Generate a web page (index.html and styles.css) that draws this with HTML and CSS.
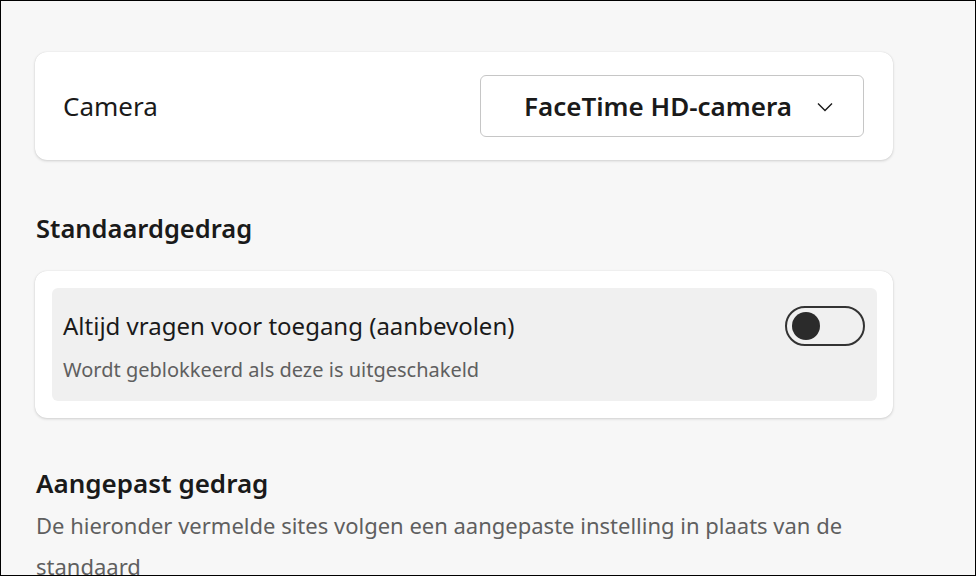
FILE: index.html
```html
<!DOCTYPE html>
<html lang="nl">
<head>
    <meta charset="UTF-8">
    <title>Camera</title>
    <link rel="stylesheet" href="styles.css">
</head>
<body>
    <div class="frame">
        <div class="content">
            <div class="card card-camera">
                <span class="label">Camera</span>
                <div class="select">
                    <span class="select-text">FaceTime HD-camera</span>
                    <svg class="chevron" width="16" height="10" viewBox="0 0 16 10">
                        <path d="M1 1.5 L8 8.5 L15 1.5" fill="none" stroke="#1a1a1a" stroke-width="1.4"/>
                    </svg>
                </div>
            </div>

            <h2 class="section-title">Standaardgedrag</h2>
            <div class="card card-list">
                <div class="row">
                    <div class="row-text">
                        <div class="row-title">Altijd vragen voor toegang (aanbevolen)</div>
                        <div class="row-sub">Wordt geblokkeerd als deze is uitgeschakeld</div>
                    </div>
                    <div class="toggle"><span class="knob"></span></div>
                </div>
            </div>

            <h2 class="section-title section-custom">Aangepast gedrag</h2>
            <p class="section-desc">De hieronder vermelde sites volgen een aangepaste instelling in plaats van de standaard</p>
        </div>
    </div>
</body>
</html>
```

FILE: styles.css
```css
body,div,p,h2,span{margin:0;padding:0;}
body{font-family:"Noto Sans","Open Sans",sans-serif;color:#1a1a1a;}
.frame{width:976px;height:576px;box-sizing:border-box;border:1px solid #000;background:#f7f7f7;overflow:hidden;}
.content{width:858px;padding:51px 0 0 34px;}
.card{background:#fff;border-radius:12px;box-shadow:0 1px 3px rgba(0,0,0,.16),0 0 1px rgba(0,0,0,.12);}
.card-camera{height:108px;display:flex;align-items:center;justify-content:space-between;padding:0 29px 0 28px;box-sizing:border-box;}
.label{font-size:26px;}
.select{width:384px;height:62px;box-sizing:border-box;border:1.5px solid #c6c6c6;border-radius:6px;display:flex;align-items:center;padding:0 30px 0 43px;justify-content:space-between;}
.select-text{font-size:26px;font-weight:600;}
.chevron{margin-top:2px;}
.section-title{font-size:25.5px;font-weight:600;margin:52px 0 27px 1px;line-height:32px;}
.card-list{padding:17px 16px 17px 17px;}
.row{background:#f0f0f0;border-radius:6px;height:113px;box-sizing:border-box;display:flex;align-items:flex-start;justify-content:space-between;padding:22px 12px 0 11px;}
.row-title{font-size:24px;line-height:32px;}
.row-sub{font-size:20px;color:#5f5f5f;margin-top:15px;line-height:26px;}
.toggle{width:80px;height:40px;box-sizing:border-box;border:2px solid #333;border-radius:20px;display:flex;align-items:center;padding-left:5px;margin-top:-4px;}
.knob{width:28px;height:28px;border-radius:50%;background:#2b2b2b;}
.section-custom{margin:49px 0 6px 1px;font-size:26px;}
.section-desc{font-size:22px;color:#5f5f5f;line-height:41px;margin-left:1px;}
```
